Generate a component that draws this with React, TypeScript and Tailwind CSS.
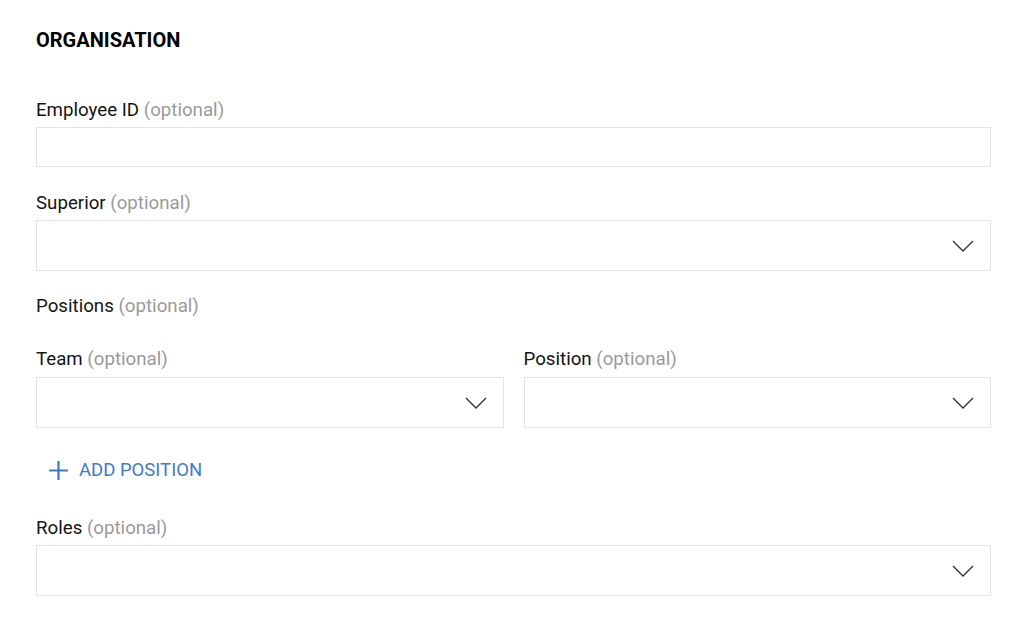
import React from "react";

const Chevron = () => (
  <svg width="22" height="12" viewBox="0 0 22 12" fill="none" className="shrink-0">
    <path d="M1 1 L11 11 L21 1" stroke="#333" strokeWidth="1.4" />
  </svg>
);

const Label = ({ text }: { text: string }) => (
  <div className="text-[18.7px] leading-[24px] text-[#141414]">
    {text} <span className="text-[#9a9a9a]">(optional)</span>
  </div>
);

const Select = () => (
  <div className="h-[51px] border border-[#e3e3e3] flex items-center justify-end pr-[16px]">
    <Chevron />
  </div>
);

export default function App() {
  return (
    <div className="bg-white w-[1024px] h-[625px] px-[36px] pt-[28px] pr-[33px]" style={{ fontFamily: "Roboto, 'Liberation Sans', sans-serif" }}>
      <div className="text-[20px] leading-[24px] font-bold text-black">ORGANISATION</div>

      <div className="mt-[46px]">
        <Label text="Employee ID" />
        <div className="mt-[5px] h-[40px] border border-[#e3e3e3]" />
      </div>

      <div className="mt-[24px]">
        <Label text="Superior" />
        <div className="mt-[5px]">
          <Select />
        </div>
      </div>

      <div className="mt-[23px]">
        <Label text="Positions" />
      </div>

      <div className="mt-[29px] flex gap-[20px]">
        <div className="flex-1">
          <Label text="Team" />
          <div className="mt-[6px]">
            <Select />
          </div>
        </div>
        <div className="flex-1">
          <Label text="Position" />
          <div className="mt-[6px]">
            <Select />
          </div>
        </div>
      </div>

      <div className="mt-[30px] flex items-center pl-[12px] h-[24px] text-[#3d7cc4]">
        <svg width="21" height="21" viewBox="0 0 21 21" fill="none">
          <path d="M10.5 1 V20 M1 10.5 H20" stroke="#3d7cc4" strokeWidth="2.2" />
        </svg>
        <span className="ml-[10px] text-[18.5px] leading-[24px]">ADD POSITION</span>
      </div>

      <div className="mt-[34px]">
        <Label text="Roles" />
        <div className="mt-[5px]">
          <Select />
        </div>
      </div>
    </div>
  );
}
